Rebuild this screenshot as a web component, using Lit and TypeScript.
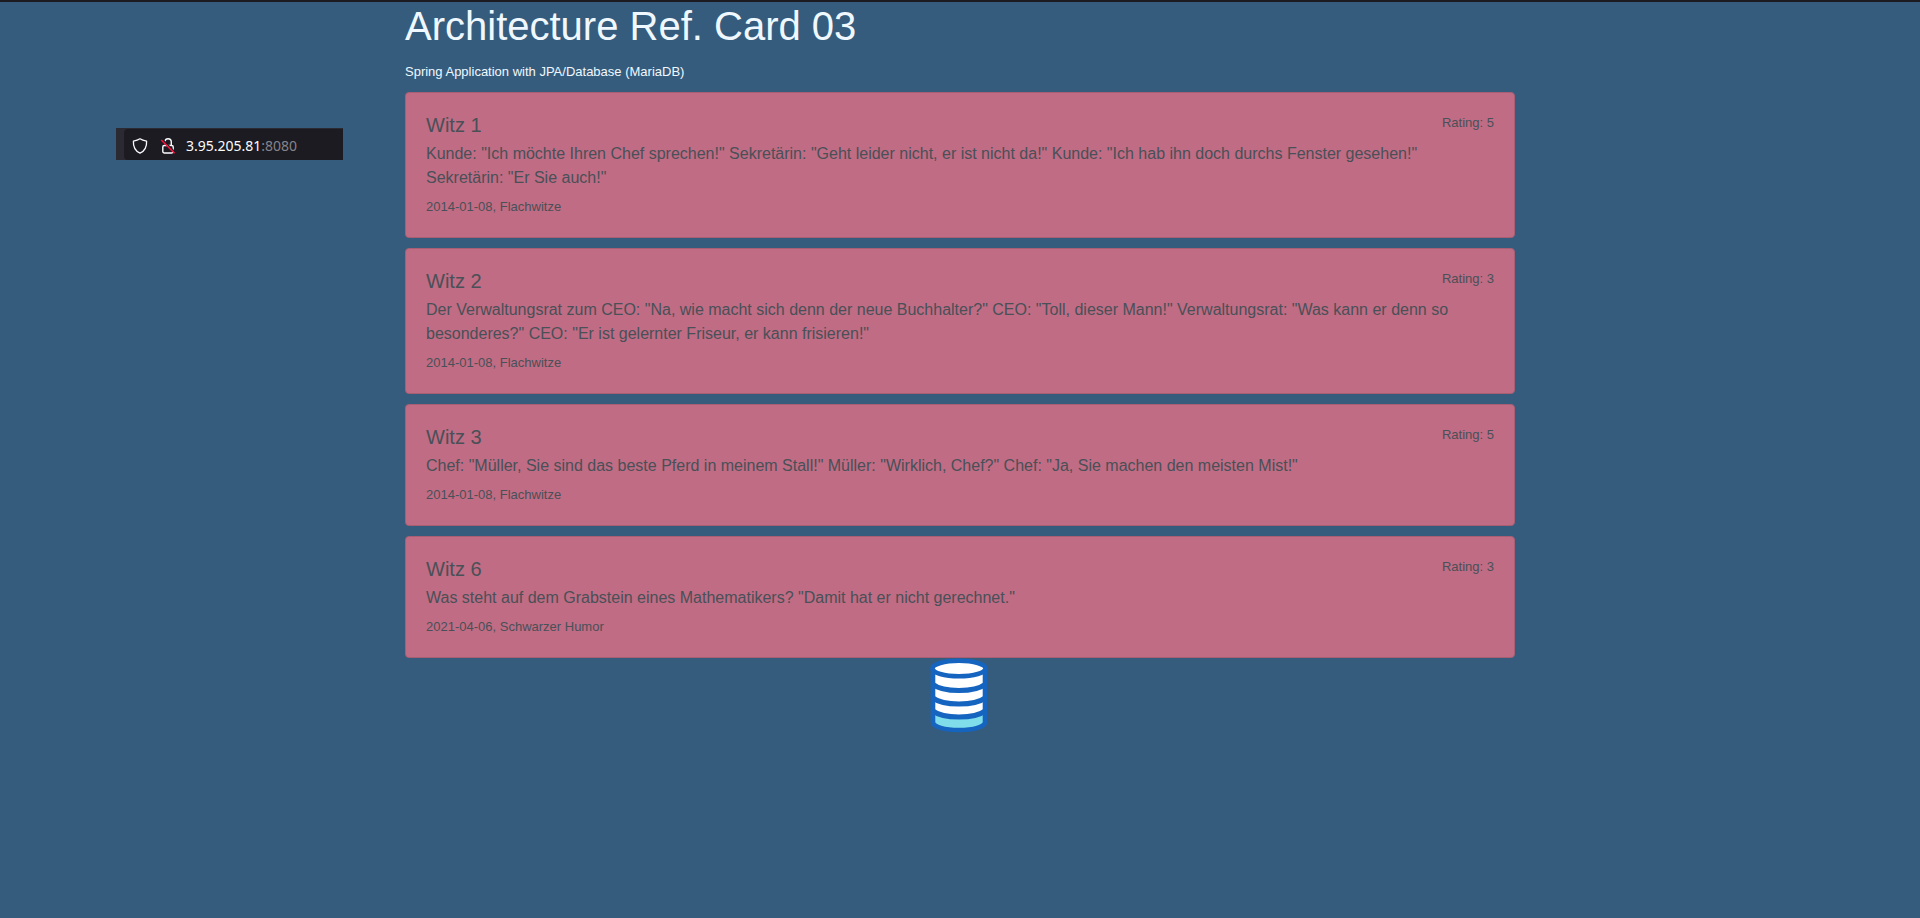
import { LitElement, html, css } from "lit";
import { customElement, property } from "lit/decorators.js";

interface Joke {
  id: number;
  text: string;
  date: string;
  category: string;
  rating: number;
}

const JOKES: Joke[] = [
  {
    id: 1,
    text: 'Kunde: "Ich möchte Ihren Chef sprechen!" Sekretärin: "Geht leider nicht, er ist nicht da!" Kunde: "Ich hab ihn doch durchs Fenster gesehen!" Sekretärin: "Er Sie auch!"',
    date: "2014-01-08",
    category: "Flachwitze",
    rating: 5,
  },
  {
    id: 2,
    text: 'Der Verwaltungsrat zum CEO: "Na, wie macht sich denn der neue Buchhalter?" CEO: "Toll, dieser Mann!" Verwaltungsrat: "Was kann er denn so besonderes?" CEO: "Er ist gelernter Friseur, er kann frisieren!"',
    date: "2014-01-08",
    category: "Flachwitze",
    rating: 3,
  },
  {
    id: 3,
    text: 'Chef: "Müller, Sie sind das beste Pferd in meinem Stall!" Müller: "Wirklich, Chef?" Chef: "Ja, Sie machen den meisten Mist!"',
    date: "2014-01-08",
    category: "Flachwitze",
    rating: 5,
  },
  {
    id: 6,
    text: 'Was steht auf dem Grabstein eines Mathematikers? "Damit hat er nicht gerechnet."',
    date: "2021-04-06",
    category: "Schwarzer Humor",
    rating: 3,
  },
];

@customElement("joke-card")
export class JokeCard extends LitElement {
  @property({ attribute: false }) joke!: Joke;

  static styles = css`
    :host {
      display: block;
    }
    .card {
      box-sizing: border-box;
      display: flex;
      flex-direction: column;
      gap: 5px;
      padding: 20px 20px 18px;
      border: 1px solid #a85f74;
      border-radius: 4px;
      background: #c06c84;
      color: #495057;
    }
    .head {
      display: flex;
      justify-content: space-between;
      align-items: flex-start;
    }
    .title {
      margin: 0;
      font-size: 20px;
      font-weight: 400;
      line-height: 24px;
    }
    .text {
      margin: 0;
    }
    .small {
      font-size: 13px;
    }
    .rating {
      line-height: 20px;
    }
  `;

  render() {
    const j = this.joke;
    return html`
      <article class="card">
        <div class="head">
          <h2 class="title">Witz ${j.id}</h2>
          <span class="small rating">Rating: ${j.rating}</span>
        </div>
        <p class="text">${j.text}</p>
        <span class="small">${j.date}, ${j.category}</span>
      </article>
    `;
  }
}

@customElement("address-bar")
export class AddressBar extends LitElement {
  static styles = css`
    :host {
      display: block;
    }
    .bar {
      box-sizing: border-box;
      height: 32px;
      padding: 1px 0 0 8px;
      background: #2b2a33;
    }
    .field {
      box-sizing: border-box;
      height: 100%;
      display: flex;
      align-items: center;
      padding: 2px 8px 0;
      border-radius: 4px 0 0 4px;
      background: #1c1b22;
      font-family: "Noto Sans", "Open Sans", sans-serif;
      font-size: 14px;
      line-height: 20px;
    }
    .icons {
      display: flex;
      gap: 12px;
      margin-right: 10px;
    }
    .icon {
      display: block;
      flex: none;
      width: 16px;
      height: 16px;
    }
    .link {
      color: #fbfbfe;
      text-decoration: none;
      white-space: nowrap;
    }
    .port {
      color: #85848b;
    }
  `;

  render() {
    return html`
      <div class="bar">
        <div class="field">
          <div class="icons">
            <svg class="icon" viewBox="0 0 16 16" fill="none" stroke="#fbfbfe" stroke-width="1.3" stroke-linejoin="round" aria-hidden="true">
              <path d="M8 .8C9.800 2 12 2.700 14.600 3.200 14.900 8.900 12.600 13 8 15.200 3.400 13 1.100 8.900 1.400 3.200 4 2.700 6.200 2 8 .8Z" />
            </svg>
            <svg class="icon" viewBox="0 0 16 16" fill="none" aria-hidden="true">
              <path d="M4.8 3.7C5.2 1.9 6.4.8 8 .8c2 0 3.3 1.4 3.3 3.3V7.4M4.2 7.5h7.6q1.400 0 1.400 1.400v4.700q0 1.400-1.400 1.400H4.200q-1.400 0-1.400-1.400V8.900q0-1.400 1.400-1.400Z" stroke="#fbfbfe" stroke-width="1.4" />
              <path d="M2.6 1.4 15.4 14.4" stroke="#1c1b22" stroke-width="1.4" />
              <path d="M1.3 2 14.6 15.3" stroke="#ff0f3f" stroke-width="1.5" />
            </svg>
          </div>
          <a class="link" href="http://3.95.205.81:8080">3.95.205.81<span class="port">:8080</span></a>
        </div>
      </div>
    `;
  }
}

@customElement("app-root")
export class AppRoot extends LitElement {
  static styles = css`
    :host {
      box-sizing: border-box;
      display: block;
      min-height: 100vh;
      border-top: 2px solid #1c1b22;
      background: #355c7d;
      color: #f0f8ff;
      font-family: "Liberation Sans", Arial, sans-serif;
      font-size: 16px;
      line-height: 24px;
    }
    .layout {
      display: grid;
      grid-template-columns: 1fr minmax(0, 1110px) 1fr;
    }
    .side {
      padding: 126px 62px 0 116px;
    }
    .heading {
      margin: 0 0 10px;
      font-size: 40px;
      font-weight: 400;
      line-height: 48px;
    }
    .lead {
      margin: 0 0 8px;
      font-size: 13px;
    }
    .jokes {
      display: flex;
      flex-direction: column;
      gap: 10px;
    }
    .database {
      display: block;
      width: 60px;
      height: 76px;
      margin: 0 auto;
    }
  `;

  render() {
    return html`
      <div class="layout">
        <aside class="side"><address-bar></address-bar></aside>
        <main>
          <h1 class="heading">Architecture Ref. Card 03</h1>
          <p class="lead">Spring Application with JPA/Database (MariaDB)</p>
          <div class="jokes">
            ${JOKES.map((j) => html`<joke-card .joke=${j}></joke-card>`)}
          </div>
          <svg class="database" viewBox="0 0 60 76" role="img" aria-label="Database">
            <path d="M3 11V66C6 70 17 72.500 29 72.500S52 70 55 66V11Z" fill="#fff" />
            <path d="M3 55C10 58 19 59 29 59S48 58 55 55V66C52 70 41 72.500 29 72.500S6 70 3 66Z" fill="#80deea" />
            <g fill="none" stroke="#1565c0" stroke-width="4.600">
              <ellipse cx="29" cy="10.500" rx="26.500" ry="7.800" fill="#fff" />
              <path d="M3 11V64C3 69 15 72 29 72S55 69 55 64V11" />
              <path stroke-width="5.200" d="M3 26.500C8 30.500 18 32.500 29 32.500S50 30.500 55 26.500M3 40C8 44 18 46 29 46S50 44 55 40M3 53C8 57 18 59 29 59S50 57 55 53" />
            </g>
          </svg>
        </main>
      </div>
    `;
  }
}
